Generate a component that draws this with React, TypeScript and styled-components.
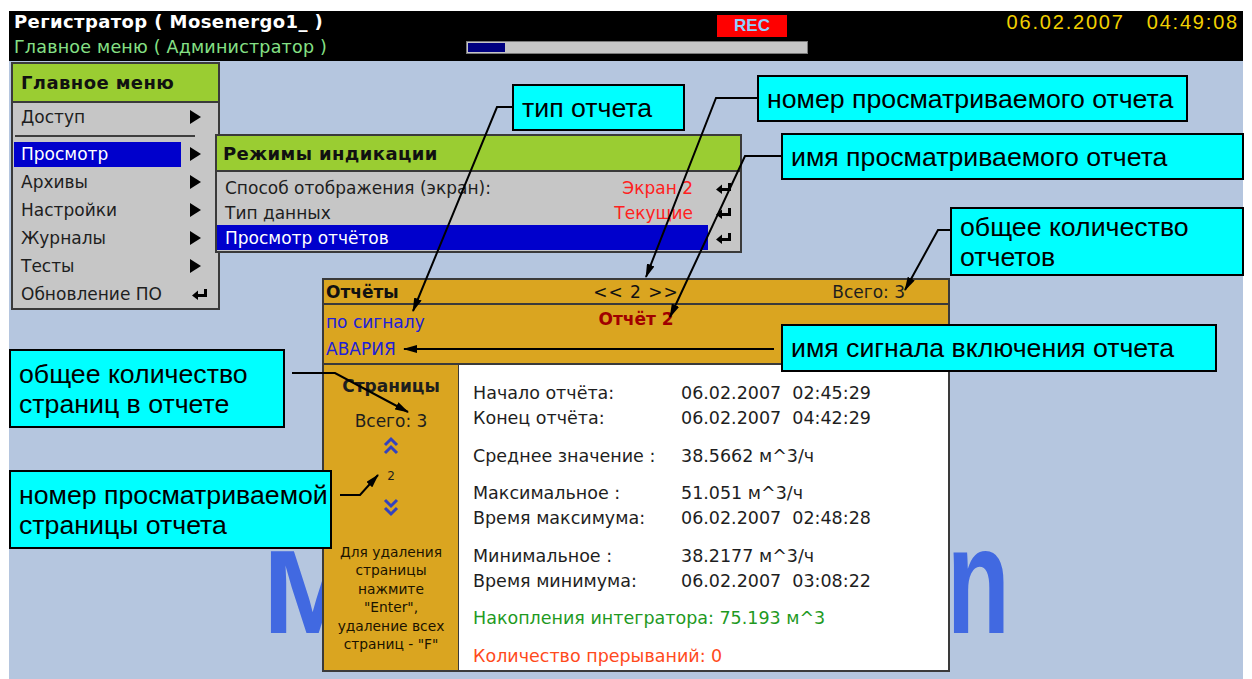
import styled, { createGlobalStyle } from 'styled-components';

const UI_FONT = `"DejaVu Sans", "Liberation Sans", sans-serif`;
const NOTE_FONT = `"Liberation Sans", Arial, sans-serif`;

const GlobalStyle = createGlobalStyle`
  html, body {
    margin: 0;
    padding: 0;
    background: #fff;
  }
  body {
    font-family: ${UI_FONT};
  }
`;

const Page = styled.div`
  position: relative;
  width: 1252px;
  height: 679px;
  padding: 11px 9px 0 9px;
  box-sizing: border-box;
  overflow: hidden;
`;

const Screen = styled.div`
  display: flex;
  flex-direction: column;
  width: 1234px;
  height: 668px;
`;

/* ---------- top status bar ---------- */

const TopBar = styled.header`
  height: 50px;
  flex: none;
  background: #000;
  display: grid;
  grid-template-columns: 457px 342px 1fr;
  font-family: ${UI_FONT};
`;

const TitleBlock = styled.div`
  padding-left: 5px;
  display: flex;
  flex-direction: column;
`;

const Title = styled.div`
  color: #fff;
  font-weight: bold;
  font-size: 18px;
  letter-spacing: 0.4px;
  line-height: 22px;
  white-space: pre;
`;

const Subtitle = styled.div`
  margin-top: 3px;
  color: #86e086;
  font-size: 17.5px;
  letter-spacing: 0.2px;
  line-height: 22px;
  white-space: pre;
`;

const StatusBlock = styled.div`
  display: flex;
  flex-direction: column;
`;

const RecBadge = styled.div`
  margin: 4px 0 0 251px;
  width: 70px;
  height: 22px;
  background: #ff0000;
  color: #8fd0ff;
  font-family: ${NOTE_FONT};
  font-weight: bold;
  font-size: 17px;
  display: flex;
  align-items: center;
  justify-content: center;
`;

const Progress = styled.div`
  margin-top: 4px;
  width: 342px;
  height: 13px;
  box-sizing: border-box;
  background: #c6c6c6;
  border: 1px solid #7a7a7a;
  padding: 1px;
`;

const ProgressFill = styled.div`
  height: 100%;
  background: #000080;
`;

const Clock = styled.div`
  text-align: right;
  padding-right: 4px;
  color: #f2d000;
  font-family: ${NOTE_FONT};
  font-size: 20px;
  letter-spacing: 1.8px;
  line-height: 22px;
  white-space: pre;
`;

/* ---------- desktop ---------- */

const Desktop = styled.main`
  position: relative;
  flex: 1;
  background: #b5c6df;
  display: flex;
  flex-direction: column;
  font-family: ${UI_FONT};
  color: #1e1e1e;
`;

const Watermark = styled.div`
  position: absolute;
  left: 254px;
  top: 443px;
  width: 747px;
  display: flex;
  align-items: baseline;
  justify-content: space-between;
  color: #4169e1;
  font-family: ${NOTE_FONT};
  font-weight: bold;
  line-height: 1;
`;

const MarkLetter = styled.span<{ $size: number; $squeeze?: number }>`
  font-size: ${(p) => p.$size}px;
  display: inline-block;
  transform: scaleX(${(p) => p.$squeeze ?? 1});
  transform-origin: right bottom;
`;

const MenuWindow = styled.div<{ $left: number; $top: number; $width: number }>`
  position: absolute;
  left: ${(p) => p.$left}px;
  top: ${(p) => p.$top}px;
  width: ${(p) => p.$width}px;
  box-sizing: border-box;
  border: 2px solid #3a3a3a;
  background: #c6c6c6;
  z-index: 2;
`;

const MenuHeader = styled.div<{ $height: number; $pad: number }>`
  height: ${(p) => p.$height}px;
  background: #9acd32;
  border-bottom: 2px solid #3a3a3a;
  display: flex;
  align-items: center;
  padding-left: ${(p) => p.$pad}px;
  font-weight: bold;
  font-size: 18px;
  letter-spacing: 0.4px;
  color: #111;
`;

const MenuRow = styled.div`
  height: 28px;
  display: grid;
  grid-template-columns: 1fr 37px;
  align-items: center;
`;

const MenuLabel = styled.div<{ $active?: boolean }>`
  margin-left: 1px;
  height: 25px;
  padding-left: 7px;
  display: flex;
  align-items: center;
  font-size: 17px;
  background: ${(p) => (p.$active ? '#0000cc' : 'transparent')};
  color: ${(p) => (p.$active ? '#fff' : '#1e1e1e')};
`;

const MenuIcon = styled.div<{ $pad?: number }>`
  display: flex;
  align-items: center;
  justify-content: ${(p) => (p.$pad !== undefined ? 'flex-start' : 'center')};
  padding-left: ${(p) => p.$pad ?? 0}px;
`;

const Separator = styled.div`
  height: 2px;
  margin: 4px 23px 3px 2px;
  background: #3e3e3e;
`;

const SubRows = styled.div`
  padding: 3px 0 1px;
`;

const SubRow = styled.div`
  height: 25px;
  display: grid;
  grid-template-columns: 1fr 32px;
  align-items: center;
`;

const SubLabel = styled.div<{ $active?: boolean }>`
  height: 25px;
  padding: 0 15px 0 8px;
  display: flex;
  align-items: center;
  justify-content: space-between;
  font-size: 17px;
  background: ${(p) => (p.$active ? '#0000cc' : 'transparent')};
  color: ${(p) => (p.$active ? '#fff' : '#1e1e1e')};
`;

const SubValue = styled.span`
  color: #ff2020;
`;

/* ---------- report window ---------- */

const ReportPanel = styled.section`
  margin: 217px 0 0 313px;
  width: 628px;
  height: 394px;
  box-sizing: border-box;
  border: 2px solid #3a3a3a;
  background: #daa520;
  display: flex;
  flex-direction: column;
  position: relative;
  z-index: 1;
`;

const PanelHeader = styled.div`
  height: 23px;
  border-bottom: 2px solid #3a3a3a;
  display: grid;
  grid-template-columns: 1fr auto 1fr;
  align-items: center;
  font-size: 17px;
`;

const PanelTitle = styled.span`
  padding-left: 2px;
  font-weight: bold;
  color: #111;
`;

const Pager = styled.span`
  white-space: pre;
  letter-spacing: 1px;
  color: #111;
`;

const Total = styled.span`
  justify-self: end;
  padding-right: 43px;
  color: #1e1e1e;
`;

const InfoBlock = styled.div`
  height: 58px;
  border-bottom: 2px solid #3a3a3a;
  display: grid;
  grid-template-columns: 1fr auto 1fr;
  font-size: 17px;
`;

const SignalInfo = styled.div`
  padding: 4px 0 0 2px;
  display: flex;
  flex-direction: column;
  color: #2020d8;
  line-height: 27px;
`;

const ReportName = styled.div`
  padding-top: 2px;
  line-height: 24px;
  font-size: 17px;
  font-weight: bold;
  color: #a00000;
`;

const PanelBody = styled.div`
  flex: 1;
  display: grid;
  grid-template-columns: 135px 1fr;
`;

const PagesColumn = styled.div`
  border-right: 1px solid #3a3a3a;
  display: flex;
  flex-direction: column;
  align-items: center;
  padding-top: 9px;
  color: #1e1e1e;
`;

const PagesTitle = styled.div`
  font-weight: bold;
  font-size: 17px;
  line-height: 24px;
`;

const PagesTotal = styled.div`
  margin-top: 11px;
  font-size: 17px;
  line-height: 24px;
`;

const Chevron = styled.svg<{ $gap: number }>`
  margin-top: ${(p) => p.$gap}px;
  display: block;
`;

const PageNumber = styled.div`
  margin-top: 12px;
  font-size: 12px;
  line-height: 16px;
`;

const Hint = styled.div`
  margin-top: 26px;
  font-size: 13.8px;
  line-height: 18.4px;
  text-align: center;
  color: #1a1300;
  white-space: pre;
`;

const Details = styled.div`
  background: #fff;
  padding: 16px 0 0 14px;
  font-size: 17.5px;
  line-height: 25px;
`;

const DetailGroup = styled.div`
  & + & {
    margin-top: 12.5px;
  }
`;

const DetailRow = styled.div`
  display: grid;
  grid-template-columns: 208px 1fr;
  white-space: pre;
  color: #1e1e1e;
`;

const Note = styled.div<{ $tone: string }>`
  white-space: pre;
  color: ${(p) => p.$tone};
`;

/* ---------- annotations ---------- */

const Callout = styled.div<{ $x: number; $y: number; $w: number; $h: number }>`
  position: absolute;
  left: ${(p) => p.$x}px;
  top: ${(p) => p.$y}px;
  width: ${(p) => p.$w}px;
  height: ${(p) => p.$h}px;
  box-sizing: border-box;
  border: 2px solid #000;
  background: #00ffff;
  padding-left: 8px;
  display: flex;
  align-items: center;
  font-family: ${NOTE_FONT};
  font-size: 26.7px;
  line-height: 30px;
  color: #000;
  white-space: pre;
  z-index: 5;
`;

const Leaders = styled.svg`
  position: absolute;
  left: 0;
  top: 0;
  z-index: 6;
  pointer-events: none;
`;

const Arrow = () => (
  <svg width="11" height="14" viewBox="0 0 11 14">
    <polygon points="0,0 11,7 0,14" fill="#000" />
  </svg>
);

const Enter = () => (
  <svg width="16" height="12" viewBox="0 0 16 12">
    <path d="M13.5 1 V7.5 H5" stroke="#000" strokeWidth="3" fill="none" />
    <polygon points="0,7.5 6,2.5 6,12" fill="#000" />
  </svg>
);

const DoubleChevron = ({ up, gap }: { up?: boolean; gap: number }) => (
  <Chevron $gap={gap} width="16" height="20" viewBox="0 0 16 20">
    <g
      transform={up ? undefined : 'rotate(180 8 10)'}
      stroke="#3342c0"
      strokeWidth="3"
      fill="none"
      strokeLinejoin="miter"
    >
      <polyline points="2,9 8,3 14,9" />
      <polyline points="2,17 8,11 14,17" />
    </g>
  </Chevron>
);

const mainItems = [
  { label: 'Просмотр', active: true, icon: 'arrow' },
  { label: 'Архивы', icon: 'arrow' },
  { label: 'Настройки', icon: 'arrow' },
  { label: 'Журналы', icon: 'arrow' },
  { label: 'Тесты', icon: 'arrow' },
  { label: 'Обновление ПО', icon: 'enter' },
];

const subItems = [
  { label: 'Способ отображения (экран):', value: 'Экран 2' },
  { label: 'Тип данных', value: 'Текущие' },
  { label: 'Просмотр отчётов', active: true },
];

const leaders = [
  'M512 107 H497 L413 311',
  'M757 98 H716 L646 277',
  'M781 156 H745 L670 317',
  'M950 230 H938 L905 290',
  'M774 349 H404',
  'M292 373 H335 L408 412',
  'M340 495 H360 L378 475',
];

export default function App() {
  return (
    <>
      <GlobalStyle />
      <Page>
        <Screen>
          <TopBar>
            <TitleBlock>
              <Title>Регистратор ( Mosenergo1_ )</Title>
              <Subtitle>Главное меню ( Администратор )</Subtitle>
            </TitleBlock>
            <StatusBlock>
              <RecBadge>REC</RecBadge>
              <Progress>
                <ProgressFill style={{ width: '11%' }} />
              </Progress>
            </StatusBlock>
            <Clock>{'06.02.2007   04:49:08'}</Clock>
          </TopBar>

          <Desktop>
            <Watermark>
              <MarkLetter $size={119}>M</MarkLetter>
              <MarkLetter $size={152} $squeeze={0.68}>n</MarkLetter>
            </Watermark>

            <MenuWindow $left={2} $top={1} $width={209}>
              <MenuHeader $height={37} $pad={8}>Главное меню</MenuHeader>
              <MenuRow>
                <MenuLabel>Доступ</MenuLabel>
                <MenuIcon $pad={9}><Arrow /></MenuIcon>
              </MenuRow>
              <Separator />
              {mainItems.map((it) => (
                <MenuRow key={it.label}>
                  <MenuLabel $active={it.active}>{it.label}</MenuLabel>
                  <MenuIcon $pad={it.icon === 'arrow' ? 9 : 11}>
                    {it.icon === 'arrow' ? <Arrow /> : <Enter />}
                  </MenuIcon>
                </MenuRow>
              ))}
            </MenuWindow>

            <MenuWindow $left={206} $top={73} $width={527}>
              <MenuHeader $height={34} $pad={6}>Режимы индикации</MenuHeader>
              <SubRows>
                {subItems.map((it) => (
                  <SubRow key={it.label}>
                    <SubLabel $active={it.active}>
                      <span>{it.label}</span>
                      {it.value && <SubValue>{it.value}</SubValue>}
                    </SubLabel>
                    <MenuIcon><Enter /></MenuIcon>
                  </SubRow>
                ))}
              </SubRows>
            </MenuWindow>

            <ReportPanel>
              <PanelHeader>
                <PanelTitle>Отчёты</PanelTitle>
                <Pager>{'<< 2 >>'}</Pager>
                <Total>Всего: 3</Total>
              </PanelHeader>
              <InfoBlock>
                <SignalInfo>
                  <span>по сигналу</span>
                  <span>АВАРИЯ</span>
                </SignalInfo>
                <ReportName>Отчёт 2</ReportName>
                <div />
              </InfoBlock>
              <PanelBody>
                <PagesColumn>
                  <PagesTitle>Страницы</PagesTitle>
                  <PagesTotal>Всего: 3</PagesTotal>
                  <DoubleChevron up gap={3} />
                  <PageNumber>2</PageNumber>
                  <DoubleChevron gap={13} />
                  <Hint>{'Для удаления\nстраницы\nнажмите\n"Enter",\nудаление всех\nстраниц - "F"'}</Hint>
                </PagesColumn>
                <Details>
                  <DetailGroup>
                    <DetailRow><span>Начало отчёта:</span><span>06.02.2007  02:45:29</span></DetailRow>
                    <DetailRow><span>Конец отчёта:</span><span>06.02.2007  04:42:29</span></DetailRow>
                  </DetailGroup>
                  <DetailGroup>
                    <DetailRow><span>Среднее значение :</span><span>38.5662 м^3/ч</span></DetailRow>
                  </DetailGroup>
                  <DetailGroup>
                    <DetailRow><span>Максимальное :</span><span>51.051 м^3/ч</span></DetailRow>
                    <DetailRow><span>Время максимума:</span><span>06.02.2007  02:48:28</span></DetailRow>
                  </DetailGroup>
                  <DetailGroup>
                    <DetailRow><span>Минимальное :</span><span>38.2177 м^3/ч</span></DetailRow>
                    <DetailRow><span>Время минимума:</span><span>06.02.2007  03:08:22</span></DetailRow>
                  </DetailGroup>
                  <DetailGroup>
                    <Note $tone="#1f9a1f">Накопления интегратора: 75.193 м^3</Note>
                  </DetailGroup>
                  <DetailGroup>
                    <Note $tone="#ff4a1c">Количество прерываний: 0</Note>
                  </DetailGroup>
                </Details>
              </PanelBody>
            </ReportPanel>
          </Desktop>
        </Screen>

        <Callout $x={512} $y={84} $w={173} $h={47}>тип отчета</Callout>
        <Callout $x={757} $y={75} $w={431} $h={47}>номер просматриваемого отчета</Callout>
        <Callout $x={781} $y={133} $w={463} $h={47}>имя просматриваемого отчета</Callout>
        <Callout $x={950} $y={207} $w={294} $h={69}>{'общее количество\nотчетов'}</Callout>
        <Callout $x={781} $y={324} $w={436} $h={48}>имя сигнала включения отчета</Callout>
        <Callout $x={9} $y={349} $w={276} $h={79}>{'общее количество\nстраниц в отчете'}</Callout>
        <Callout $x={9} $y={470} $w={323} $h={79}>{'номер просматриваемой\nстраницы отчета'}</Callout>

        <Leaders width="1252" height="679" viewBox="0 0 1252 679">
          <defs>
            <marker
              id="tip"
              viewBox="0 0 14 8"
              refX="13"
              refY="4"
              markerWidth="14"
              markerHeight="8"
              orient="auto"
              markerUnits="userSpaceOnUse"
            >
              <path d="M0 0 L14 4 L0 8 z" fill="#000" />
            </marker>
          </defs>
          {leaders.map((d) => (
            <path key={d} d={d} stroke="#000" strokeWidth="2" fill="none" markerEnd="url(#tip)" />
          ))}
        </Leaders>
      </Page>
    </>
  );
}
